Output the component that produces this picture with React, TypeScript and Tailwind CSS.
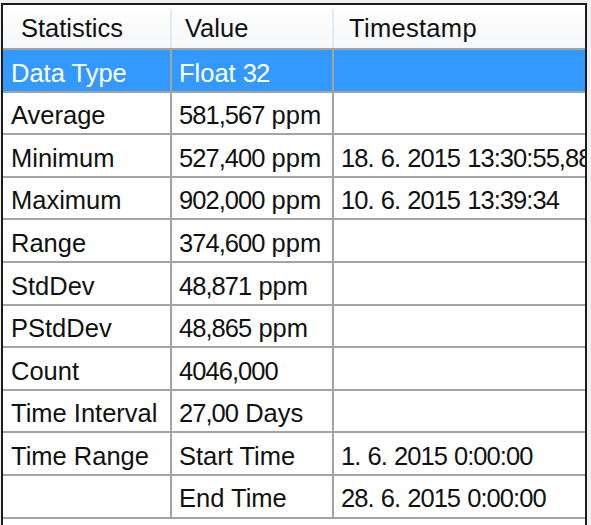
import React from "react";

type Row = { name: string; value: string; stamp: string; selected?: boolean };

const ROWS: Row[] = [
  { name: "Data Type", value: "Float 32", stamp: "", selected: true },
  { name: "Average", value: "581,567 ppm", stamp: "" },
  { name: "Minimum", value: "527,400 ppm", stamp: "18. 6. 2015 13:30:55,88" },
  { name: "Maximum", value: "902,000 ppm", stamp: "10. 6. 2015 13:39:34" },
  { name: "Range", value: "374,600 ppm", stamp: "" },
  { name: "StdDev", value: "48,871 ppm", stamp: "" },
  { name: "PStdDev", value: "48,865 ppm", stamp: "" },
  { name: "Count", value: "4046,000", stamp: "" },
  { name: "Time Interval", value: "27,00 Days", stamp: "" },
  { name: "Time Range", value: "Start Time", stamp: "1. 6. 2015 0:00:00" },
  { name: "", value: "End Time", stamp: "28. 6. 2015 0:00:00" },
];

// the grid's bitmap font has narrower digits than Liberation Sans
function Num({ text }: { text: string }) {
  return (
    <span>
      {text.split(/([0-9.,:]+)/).map((part, i) =>
        /[0-9]/.test(part) ? (
          <span key={i} className="tracking-[-0.95px]">
            {part}
          </span>
        ) : (
          part
        )
      )}
    </span>
  );
}

export default function App() {
  return (
    <div className="h-[525px] w-[591px] overflow-hidden bg-[#f0f0f0] pl-[1px] pt-[3px] font-['Liberation_Sans',Arial,sans-serif] text-[25.5px] leading-none text-[#111]">
      <div className="h-[522px] w-[586px] overflow-hidden border-2 border-b-0 border-[#1c1c1c] bg-white">
        {/* header */}
        <div className="flex h-[45px] border-b-2 border-[#a3a3a3] bg-gradient-to-b from-white to-[#f6f7f9] pt-[4px]">
          <div className="flex w-[169px] shrink-0 items-center border-r-2 border-[#e2eaf4] pl-[18px]">Statistics</div>
          <div className="flex w-[162px] shrink-0 items-center border-r-2 border-[#e2eaf4] pl-[13px]">Value</div>
          <div className="flex flex-1 items-center pl-[15px] tracking-[0.3px]">Timestamp</div>
        </div>

        {ROWS.map((r, i) => (
          <div
            key={i}
            className={`flex h-[42.6px] border-b-2 border-[#a3a3a3] ${r.selected ? "bg-[#3399ff] text-white" : ""}`}
          >
            <div className="flex w-[169px] shrink-0 items-center whitespace-nowrap border-r-2 border-[#a3a3a3] pl-[8px] pt-[6px]">
              {r.name}
            </div>
            <div className="flex w-[162px] shrink-0 items-center whitespace-nowrap border-r-2 border-[#a3a3a3] pl-[7px] pt-[6px]">
              <Num text={r.value} />
            </div>
            <div className="flex min-w-0 flex-1 items-center overflow-hidden whitespace-nowrap pl-[7px] pt-[6px]">
              <Num text={r.stamp} />
            </div>
          </div>
        ))}
      </div>
    </div>
  );
}
